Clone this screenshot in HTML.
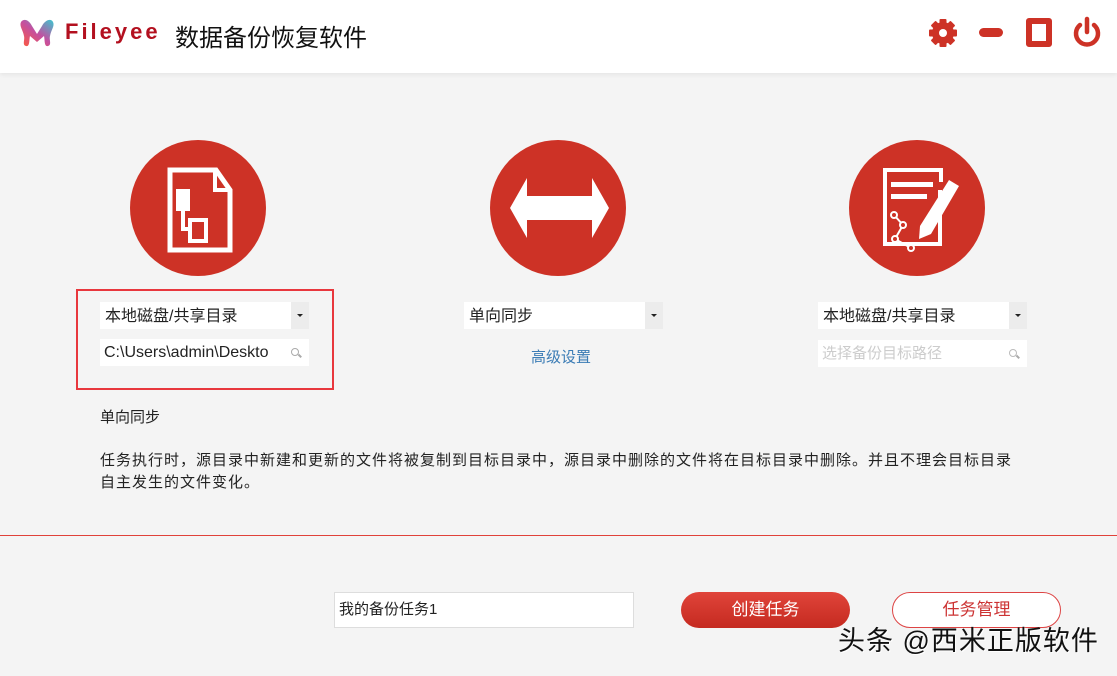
<!DOCTYPE html>
<html><head><meta charset="utf-8"><style>
*{margin:0;padding:0;box-sizing:border-box}
body{width:1117px;height:676px;background:#f4f4f4;font-family:"Liberation Sans","Noto Sans CJK SC",sans-serif;position:relative;overflow:hidden;color:#222}
.abs{position:absolute}
.hdr{left:0;top:0;width:1117px;height:73px;background:#fff;box-shadow:0 2px 4px rgba(0,0,0,.06)}
.circ{width:136px;height:136px;border-radius:50%;background:#cd3226;top:140px}
.dd{height:27px;background:#fff;font-size:16px;line-height:29px;padding-left:5px;width:209px}
.dd .ar{position:absolute;right:0;top:0;width:18px;height:27px;background:#ececec}
.dd .ar:after{content:"";position:absolute;left:6px;top:12px;border-left:3px solid transparent;border-right:3px solid transparent;border-top:3px solid #222}
.inp{height:27px;background:#fff;font-size:16px;line-height:27px;padding-left:4px;width:209px}
.mag{position:absolute;right:10px;top:9px;width:8px;height:8px;border:1.5px solid #aaa;border-radius:50%}
.mag:after{content:"";position:absolute;left:6px;top:6px;width:4px;height:1.5px;background:#aaa;transform:rotate(45deg)}
</style></head><body>
<div class="abs hdr"></div>
<svg class="abs" style="left:18px;top:18px" width="38" height="30" viewBox="0 0 38 30">
<defs><linearGradient id="g" x1="0" y1="1" x2="1" y2="0"><stop offset="0" stop-color="#ff5a3c"/><stop offset=".5" stop-color="#c44fa0"/><stop offset="1" stop-color="#3cc6d0"/></linearGradient></defs>
<path d="M3 4 C6 0 11 2 14 8 L19 16 L24 8 C27 2 33 0 35 4 C37 8 33 12 32 18 C31 22 34 27 30 28 C26 29 27 22 26 18 L19 24 L12 18 C11 22 12 29 8 28 C4 27 7 22 6 18 C5 12 1 8 3 4Z" fill="url(#g)"/></svg>
<div class="abs" style="left:65px;top:19px;font-size:22px;font-weight:bold;color:#b3101f;letter-spacing:3px">Fileyee</div>
<div class="abs" style="left:175px;top:18px;font-size:24px;color:#111">数据备份恢复软件</div>
<svg class="abs" style="left:927px;top:17px" width="32" height="32" viewBox="0 0 32 32"><g fill="#cd3226"><circle cx="16" cy="16" r="11"/><g><rect x="12.5" y="2" width="7" height="28" rx="1"/><rect x="12.5" y="2" width="7" height="28" rx="1" transform="rotate(45 16 16)"/><rect x="12.5" y="2" width="7" height="28" rx="1" transform="rotate(90 16 16)"/><rect x="12.5" y="2" width="7" height="28" rx="1" transform="rotate(135 16 16)"/></g></g><circle cx="16" cy="16" r="4" fill="#fff"/></svg>
<div class="abs" style="left:979px;top:28px;width:24px;height:9px;border-radius:5px;background:#cd3226"></div>
<div class="abs" style="left:1026px;top:18px;width:26px;height:29px;border:6px solid #cd3226;border-radius:3px"></div>
<svg class="abs" style="left:1071px;top:16px" width="32" height="32" viewBox="0 0 32 32"><path d="M9 9 A11 11 0 1 0 23 9" fill="none" stroke="#cd3226" stroke-width="4.5" stroke-linecap="round"/><line x1="16" y1="3" x2="16" y2="16" stroke="#cd3226" stroke-width="4.5" stroke-linecap="round"/></svg>

<div class="abs circ" style="left:130px"></div>
<svg class="abs" style="left:130px;top:140px" width="136" height="136" viewBox="0 0 136 136"><path d="M40 30 H86 L100 50 V110 H40Z" fill="none" stroke="#fff" stroke-width="5"/><path d="M85 31 V50 H99" fill="none" stroke="#fff" stroke-width="4"/><rect x="46" y="49" width="14" height="22" fill="#fff"/><path d="M53 70 V89 H60" stroke="#fff" stroke-width="4" fill="none"/><rect x="60" y="80" width="16" height="21" fill="none" stroke="#fff" stroke-width="4"/></svg>
<div class="abs circ" style="left:490px"></div>
<svg class="abs" style="left:490px;top:140px" width="136" height="136" viewBox="0 0 136 136"><path d="M20 68 L37 38 V56 H102 V38 L119 68 L102 98 V80 H37 V98Z" fill="#fff"/></svg>
<div class="abs circ" style="left:849px"></div>
<svg class="abs" style="left:849px;top:140px" width="136" height="136" viewBox="0 0 136 136"><path d="M92 42 V30 H36 V104 H91 V50" fill="none" stroke="#fff" stroke-width="4"/><rect x="42" y="42" width="42" height="5" fill="#fff"/><rect x="42" y="54" width="36" height="5" fill="#fff"/><path d="M100 40 L110 46 L82 94 L70 99 L71 86Z" fill="#fff"/><path d="M45 75 L54 85 L46 99 L62 108" fill="none" stroke="#fff" stroke-width="2"/><g fill="#cd3226" stroke="#fff" stroke-width="2"><circle cx="45" cy="75" r="3"/><circle cx="54" cy="85" r="3"/><circle cx="46" cy="99" r="3"/><circle cx="62" cy="108" r="3"/></g></svg>

<div class="abs" style="left:76px;top:289px;width:258px;height:101px;border:2px solid #e8373d"></div>
<div class="abs dd" style="left:100px;top:302px">本地磁盘/共享目录<div class="ar"></div></div>
<div class="abs inp" style="left:100px;top:339px">C:\Users\admin\Deskto<div class="mag"></div></div>
<div class="abs dd" style="left:464px;top:302px;width:199px">单向同步<div class="ar"></div></div>
<div class="abs" style="left:531px;top:346px;font-size:15px;color:#3b7cb5">高级设置</div>
<div class="abs dd" style="left:818px;top:302px">本地磁盘/共享目录<div class="ar"></div></div>
<div class="abs inp" style="left:818px;top:340px;color:#ccc;font-size:15px">选择备份目标路径<div class="mag" style="border-color:#bbb"></div></div>

<div class="abs" style="left:100px;top:406px;font-size:15px">单向同步</div>
<div class="abs" style="left:100px;top:450px;width:1000px;font-size:15px;line-height:22px;letter-spacing:1px;white-space:nowrap">任务执行时，源目录中新建和更新的文件将被复制到目标目录中，源目录中删除的文件将在目标目录中删除。并且不理会目标目录<br>自主发生的文件变化。</div>
<div class="abs" style="left:0;top:535px;width:1117px;height:1px;background:#e0423a"></div>

<div class="abs" style="left:334px;top:592px;width:300px;height:36px;background:#fff;border:1px solid #ddd;font-size:15px;line-height:34px;padding-left:4px">我的备份任务1</div>
<div class="abs" style="left:681px;top:592px;width:169px;height:36px;border-radius:18px;background:linear-gradient(#e0443a,#c52a20);color:#fff;font-size:17px;text-align:center;line-height:36px">创建任务</div>
<div class="abs" style="left:892px;top:592px;width:169px;height:36px;border-radius:18px;border:1px solid #d44;background:#fff;color:#c33;font-size:17px;text-align:center;line-height:34px">任务管理</div>
<div class="abs" style="left:838px;top:619px;font-size:27px;color:#111;letter-spacing:1px;text-shadow:1px 1px 0 #fff">头条 @西米正版软件</div>
</body></html>
